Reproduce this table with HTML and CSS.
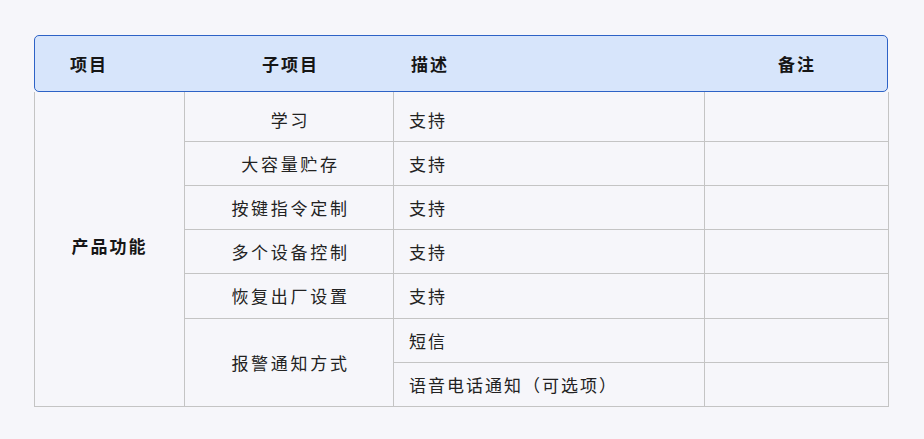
FILE: index.html
```html
<!DOCTYPE html>
<html lang="zh-CN">
<head>
<meta charset="utf-8">
<link rel="stylesheet" href="styles.css">
</head>
<body>
<div class="wrap">
  <div class="head">
    <div class="h h1">项目</div>
    <div class="h h2">子项目</div>
    <div class="h h3">描述</div>
    <div class="h h4">备注</div>
  </div>
  <table class="spec">
    <colgroup>
      <col class="c1"><col class="c2"><col class="c3"><col class="c4">
    </colgroup>
    <tbody>
      <tr class="first">
        <td class="cat" rowspan="7">产品功能</td>
        <td class="sub">学习</td>
        <td class="desc">支持</td>
        <td class="note"></td>
      </tr>
      <tr>
        <td class="sub">大容量贮存</td>
        <td class="desc">支持</td>
        <td class="note"></td>
      </tr>
      <tr>
        <td class="sub">按键指令定制</td>
        <td class="desc">支持</td>
        <td class="note"></td>
      </tr>
      <tr>
        <td class="sub">多个设备控制</td>
        <td class="desc">支持</td>
        <td class="note"></td>
      </tr>
      <tr class="tall">
        <td class="sub">恢复出厂设置</td>
        <td class="desc">支持</td>
        <td class="note"></td>
      </tr>
      <tr>
        <td class="sub" rowspan="2">报警通知方式</td>
        <td class="desc">短信</td>
        <td class="note"></td>
      </tr>
      <tr>
        <td class="desc">语音电话通知（可选项）</td>
        <td class="note"></td>
      </tr>
    </tbody>
  </table>
</div>
</body>
</html>
```
FILE: styles.css
```css
html, body {
  margin: 0;
  padding: 0;
  background: #f6f6fa;
}
body {
  font-family: "Noto Sans CJK SC", "Noto Sans", sans-serif;
  color: #222;
  text-spacing-trim: space-all;
  font-variant-east-asian: full-width;
}
.wrap {
  padding: 35px 0 0 34px;
  width: 854px;
}
.head {
  display: grid;
  grid-template-columns: 150px 209px 311px 1fr;
  height: 55px;
  align-items: center;
  background: #d7e5fb;
  border: 1px solid #2d62c6;
  border-radius: 5px;
  font-size: 17px;
  font-weight: 700;
  letter-spacing: 2px;
  color: #161616;
}
.h1 { padding-left: 35px; }
.h2 { text-align: center; padding-left: 2px; }
.h3 { padding-left: 17px; }
.h4 { text-align: center; padding-left: 2px; }
.spec {
  width: 854px;
  border-collapse: collapse;
  table-layout: fixed;
  font-size: 17px;
}
.c1 { width: 150px; }
.c2 { width: 209px; }
.c3 { width: 311px; }
.c4 { width: 184px; }
.spec td {
  border: 1px solid #c4c4c4;
  height: 43px;
  padding: 0;
  vertical-align: middle;
  letter-spacing: 2px;
}
.spec tr.first td { border-top: none; }
.spec tr.first td.sub,
.spec tr.first td.desc,
.spec tr.first td.note {
  height: 49px;
  padding-top: 7px;
  box-sizing: border-box;
}
.spec tr.tall td { height: 44px; }
.cat {
  text-align: center;
  font-weight: 700;
  color: #161616;
  padding-bottom: 6px !important;
}
.sub {
  text-align: center;
  letter-spacing: 2.7px !important;
  padding-left: 3px !important;
}
.desc {
  padding-left: 15px !important;
}
```
